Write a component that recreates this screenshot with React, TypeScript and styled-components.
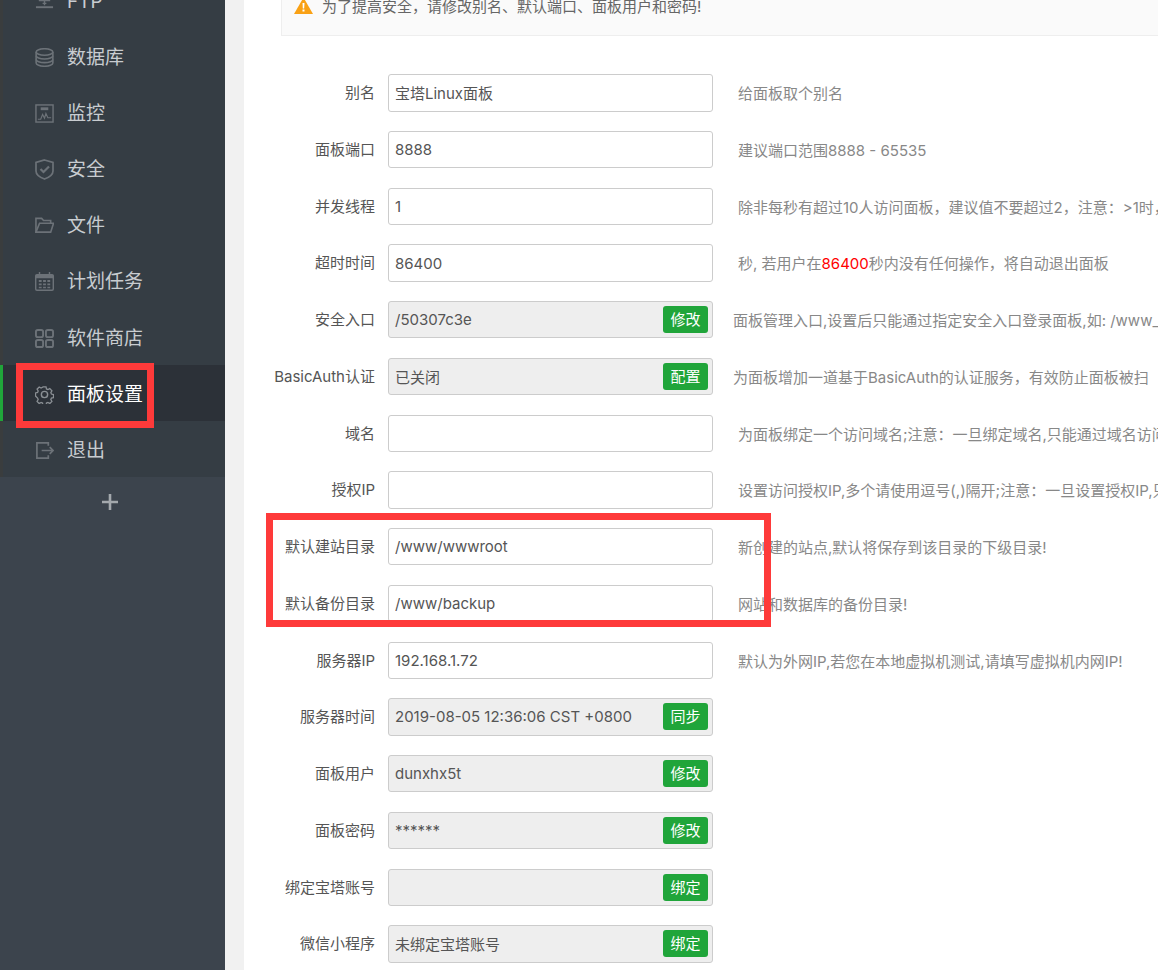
import React from "react";
import styled, { createGlobalStyle } from "styled-components";

const Global = createGlobalStyle`
  html, body { margin: 0; padding: 0; height: 970px; overflow: hidden; background: #f1f1f1; }
  * { box-sizing: border-box; }
  body { font-family: Inter, "Noto Sans CJK SC", sans-serif; }
`;

const Page = styled.div`
  position: relative;
  display: flex;
  width: 1158px;
  height: 970px;
  overflow: hidden;
`;

const Sidebar = styled.aside`
  flex: 0 0 225px;
  height: 970px;
  background: #3c444d;
`;

const Menu = styled.nav`
  margin-top: -28.3px;
  background: #353d44;
`;

const MenuItem = styled.div<{ $active?: boolean }>`
  display: flex;
  align-items: center;
  gap: 13px;
  height: 56.2px;
  padding: 2.5px 0 0 32px;
  border-left: 3px solid ${(p) => (p.$active ? "#20a53a" : "#3a3d3e")};
  background: ${(p) => (p.$active ? "#2c3138" : "transparent")};
  color: ${(p) => (p.$active ? "#ffffff" : "#c8ccd0")};
  font-size: 19px;
  line-height: 1;
`;

const IconBox = styled.span`
  display: flex;
  flex: 0 0 19px;
  width: 19px;
  height: 19px;
  color: #6c7278;
`;

const AddRow = styled.div`
  display: flex;
  justify-content: center;
  padding: 17px 5px 0 0;
  color: #a4a9ad;
`;

const Main = styled.main`
  flex: 1;
  min-width: 0;
  margin-left: 19px;
  height: 970px;
  background: #fff;
  overflow: hidden;
`;

const Alert = styled.div`
  display: flex;
  align-items: center;
  gap: 9px;
  height: 60px;
  margin: -24px 0 0 37px;
  padding: 23px 0 21px 12px;
  background: #fafafa;
  border: 1px solid #eee;
  border-right: 0;
  color: #666;
  font-size: 15px;
  line-height: 20px;
  & > svg {
    margin-top: -4px;
  }
`;

const Form = styled.div`
  padding-top: 38.25px;
`;

const Row = styled.div`
  display: flex;
  height: 56.74px;
`;

const Label = styled.span`
  flex: 0 0 131px;
  height: 37px;
  text-align: right;
  color: #555;
  font-size: 15px;
  line-height: 37px;
  white-space: nowrap;
`;

const Field = styled.div`
  position: relative;
  flex: 0 0 325px;
  height: 37.3px;
  margin-left: 13px;
`;

const Input = styled.input<{ $locked?: boolean }>`
  display: block;
  width: 100%;
  height: 100%;
  padding: 0 6px;
  border: 1px solid #ccc;
  border-radius: 3px;
  outline: none;
  background: ${(p) => (p.$locked ? "#eee" : "#fff")};
  color: #555;
  font: 15px Inter, "Noto Sans CJK SC", sans-serif;
`;

const ActionButton = styled.button`
  position: absolute;
  top: 5px;
  right: 5px;
  width: 45px;
  height: 27px;
  padding: 0;
  border: 0;
  border-radius: 3px;
  background: #20a53a;
  color: #fff;
  font: 15px/27px Inter, "Noto Sans CJK SC", sans-serif;
`;

const Desc = styled.span<{ $tight?: boolean }>`
  margin-left: ${(p) => (p.$tight ? "20px" : "25px")};
  height: 37px;
  color: #888;
  font-size: 15px;
  line-height: 39px;
  white-space: nowrap;
`;

const Hot = styled.span`
  color: #f00;
`;

const Highlight = styled.div<{ $x: number; $y: number; $w: number; $h: number }>`
  position: absolute;
  left: ${(p) => p.$x}px;
  top: ${(p) => p.$y}px;
  width: ${(p) => p.$w}px;
  height: ${(p) => p.$h}px;
  border: 7px solid #fe3a3a;
  pointer-events: none;
`;

const svgProps = {
  width: 19,
  height: 19,
  viewBox: "0 0 20 20",
  fill: "none",
  stroke: "currentColor",
  strokeWidth: 1.5,
} as const;

const FtpIcon = () => (
  <svg {...svgProps}>
    <path d="M5 9V6a5 5 0 0 1 10 0v3" />
    <path d="M4 9h12M8 12h4M10 9v5" />
    <path d="M1 16h18" strokeWidth="2" />
  </svg>
);
const DbIcon = () => (
  <svg {...svgProps} strokeWidth="1.7">
    <ellipse cx="10" cy="4.200" rx="8.800" ry="3.400" />
    <path d="M1.200 4.200v11.600c0 1.800 3.900 3.400 8.800 3.400s8.800-1.600 8.800-3.400V4.200" />
    <path d="M1.200 8.200c0 1.800 3.900 3.400 8.800 3.400s8.800-1.600 8.800-3.400M1.200 12c0 1.800 3.900 3.400 8.800 3.400s8.800-1.600 8.800-3.400" />
  </svg>
);
const MonitorIcon = () => (
  <svg {...svgProps}>
    <rect x="1" y="1" width="18" height="18" />
    <rect x="6" y="3.500" width="8" height="3" fill="currentColor" stroke="none" />
    <path d="M3 16h3l2-5 2 4 1.500-5 2 4.500H17" strokeWidth="1.200" />
  </svg>
);
const ShieldIcon = () => (
  <svg width="19" height="21" viewBox="0 0 19 21" fill="none" stroke="currentColor" strokeWidth="1.700" style={{ marginTop: -1, flex: "none" }}>
    <path d="M9.500 1L18 3.500V12c0 3.800-4.300 6.500-8.500 8C5.300 18.500 1 15.800 1 12V3.500z" />
    <path d="M5.500 10l3 3 5.500-5.500" strokeWidth="2.200" />
  </svg>
);
const FolderIcon = () => (
  <svg {...svgProps} strokeWidth="1.700">
    <path d="M1 17V2.500h6l2 2.200h7.500v3" />
    <path d="M1 17L4.800 7.700H19.500L16.500 17z" />
  </svg>
);
const CalendarIcon = () => (
  <svg {...svgProps} stroke="none" fill="currentColor">
    <path fillRule="evenodd" d="M4 0h1.500v2h9V0H16v2h2a2 2 0 0 1 2 2v14a2 2 0 0 1-2 2H2a2 2 0 0 1-2-2V4a2 2 0 0 1 2-2h2zM1.500 6.500V18c0 .3.2.5.5.5h16c.3 0 .5-.2.5-.5V6.500z" />
    <path d="M4 8.500h3v2H4zM8.500 8.500h3v2h-3zM13 8.500h3v2h-3zM4 12h3v2H4zM8.500 12h3v2h-3zM13 12h3v2h-3zM4 15.500h3v1.500H4zM8.500 15.500h3v1.500h-3zM13 15.500h3v1.500h-3z" />
  </svg>
);
const GridIcon = () => (
  <svg {...svgProps} strokeWidth="2">
    <rect x="1" y="1" width="7.500" height="7.500" rx="2" />
    <rect x="11.500" y="1" width="7.500" height="7.500" rx="2" />
    <rect x="1" y="11.500" width="7.500" height="7.500" rx="2" />
    <rect x="11.500" y="11.500" width="7.500" height="7.500" rx="2" />
  </svg>
);
const GearIcon = () => (
  <svg {...svgProps} strokeWidth="1.500" color="#8a8f94">
    <path d="M8.200 1h3.600l.5 2.500 1.700.8 2.200-1.200 2.500 2.600-1.300 2.100.7 1.700 2.400.6v3.600l-2.400.5-.7 1.700 1.300 2.200-2.500 2.500-2.200-1.300-1.700.7-.5 2.500H8.200l-.5-2.500-1.700-.7-2.200 1.300-2.500-2.500 1.300-2.200-.7-1.700L-.5 11.800V8.200l2.400-.6.700-1.700-1.300-2.100 2.500-2.600L6 2.400l1.700-.8z" transform="translate(1 1) scale(.9)" />
    <circle cx="10" cy="10" r="3.300" />
  </svg>
);
const ExitIcon = () => (
  <svg {...svgProps} strokeWidth="1.800">
    <path d="M14 5V2H2v16h12v-3" />
    <path d="M7 10h12M15.500 6.500L19 10l-3.500 3.500" />
  </svg>
);
const WarnIcon = () => (
  <svg width="19" height="17" viewBox="0 0 19 17">
    <path d="M9.500 0.500L19 17H0z" fill="#f9a115" />
    <path d="M8.500 6h2l-.3 5.500H8.800z" fill="#fff" />
    <rect x="8.500" y="12.500" width="2" height="2" fill="#fff" />
  </svg>
);
const PlusIcon = () => (
  <svg width="16" height="16" viewBox="0 0 16 16">
    <path d="M0 6.700h16v2.600H0zM6.700 0h2.600v16H6.700z" fill="currentColor" />
  </svg>
);

const menu: { name: string; icon: React.ReactNode; active?: boolean }[] = [
  { name: "FTP", icon: <FtpIcon /> },
  { name: "数据库", icon: <DbIcon /> },
  { name: "监控", icon: <MonitorIcon /> },
  { name: "安全", icon: <ShieldIcon /> },
  { name: "文件", icon: <FolderIcon /> },
  { name: "计划任务", icon: <CalendarIcon /> },
  { name: "软件商店", icon: <GridIcon /> },
  { name: "面板设置", icon: <GearIcon />, active: true },
  { name: "退出", icon: <ExitIcon /> },
];

type RowData = {
  label: string;
  value: string;
  action?: string;
  desc?: React.ReactNode;
  tight?: boolean;
};

const rows: RowData[] = [
  { label: "别名", value: "宝塔Linux面板", desc: "给面板取个别名" },
  { label: "面板端口", value: "8888", desc: "建议端口范围8888 - 65535" },
  { label: "并发线程", value: "1", desc: "除非每秒有超过10人访问面板，建议值不要超过2，注意：>1时，将无法使用面板的部分功能" },
  { label: "超时时间", value: "86400", desc: <>秒, 若用户在<Hot>86400</Hot>秒内没有任何操作，将自动退出面板</> },
  { label: "安全入口", value: "/50307c3e", action: "修改", tight: true, desc: "面板管理入口,设置后只能通过指定安全入口登录面板,如: /www_bt_cn" },
  { label: "BasicAuth认证", value: "已关闭", action: "配置", tight: true, desc: "为面板增加一道基于BasicAuth的认证服务，有效防止面板被扫" },
  { label: "域名", value: "", desc: "为面板绑定一个访问域名;注意：一旦绑定域名,只能通过域名访问面板!" },
  { label: "授权IP", value: "", desc: "设置访问授权IP,多个请使用逗号(,)隔开;注意：一旦设置授权IP,只有指定IP的电脑能访问面板!" },
  { label: "默认建站目录", value: "/www/wwwroot", desc: "新创建的站点,默认将保存到该目录的下级目录!" },
  { label: "默认备份目录", value: "/www/backup", desc: "网站和数据库的备份目录!" },
  { label: "服务器IP", value: "192.168.1.72", desc: "默认为外网IP,若您在本地虚拟机测试,请填写虚拟机内网IP!" },
  { label: "服务器时间", value: "2019-08-05 12:36:06 CST +0800", action: "同步" },
  { label: "面板用户", value: "dunxhx5t", action: "修改" },
  { label: "面板密码", value: "******", action: "修改" },
  { label: "绑定宝塔账号", value: "", action: "绑定" },
  { label: "微信小程序", value: "未绑定宝塔账号", action: "绑定" },
];

export default function App() {
  return (
    <Page>
      <Global />
      <Sidebar>
        <Menu>
          {menu.map((m) => (
            <MenuItem key={m.name} $active={m.active}>
              <IconBox>{m.icon}</IconBox>
              {m.name}
            </MenuItem>
          ))}
        </Menu>
        <AddRow>
          <PlusIcon />
        </AddRow>
      </Sidebar>
      <Main>
        <Alert>
          <WarnIcon />
          为了提高安全，请修改别名、默认端口、面板用户和密码!
        </Alert>
        <Form>
          {rows.map((r) => (
            <Row key={r.label}>
              <Label>{r.label}</Label>
              <Field>
                <Input value={r.value} readOnly $locked={!!r.action} />
                {r.action && <ActionButton>{r.action}</ActionButton>}
              </Field>
              {r.desc && <Desc $tight={r.tight}>{r.desc}</Desc>}
            </Row>
          ))}
        </Form>
      </Main>
      <Highlight $x={16} $y={363} $w={138} $h={65} />
      <Highlight $x={266} $y={513} $w={505} $h={114} />
    </Page>
  );
}
